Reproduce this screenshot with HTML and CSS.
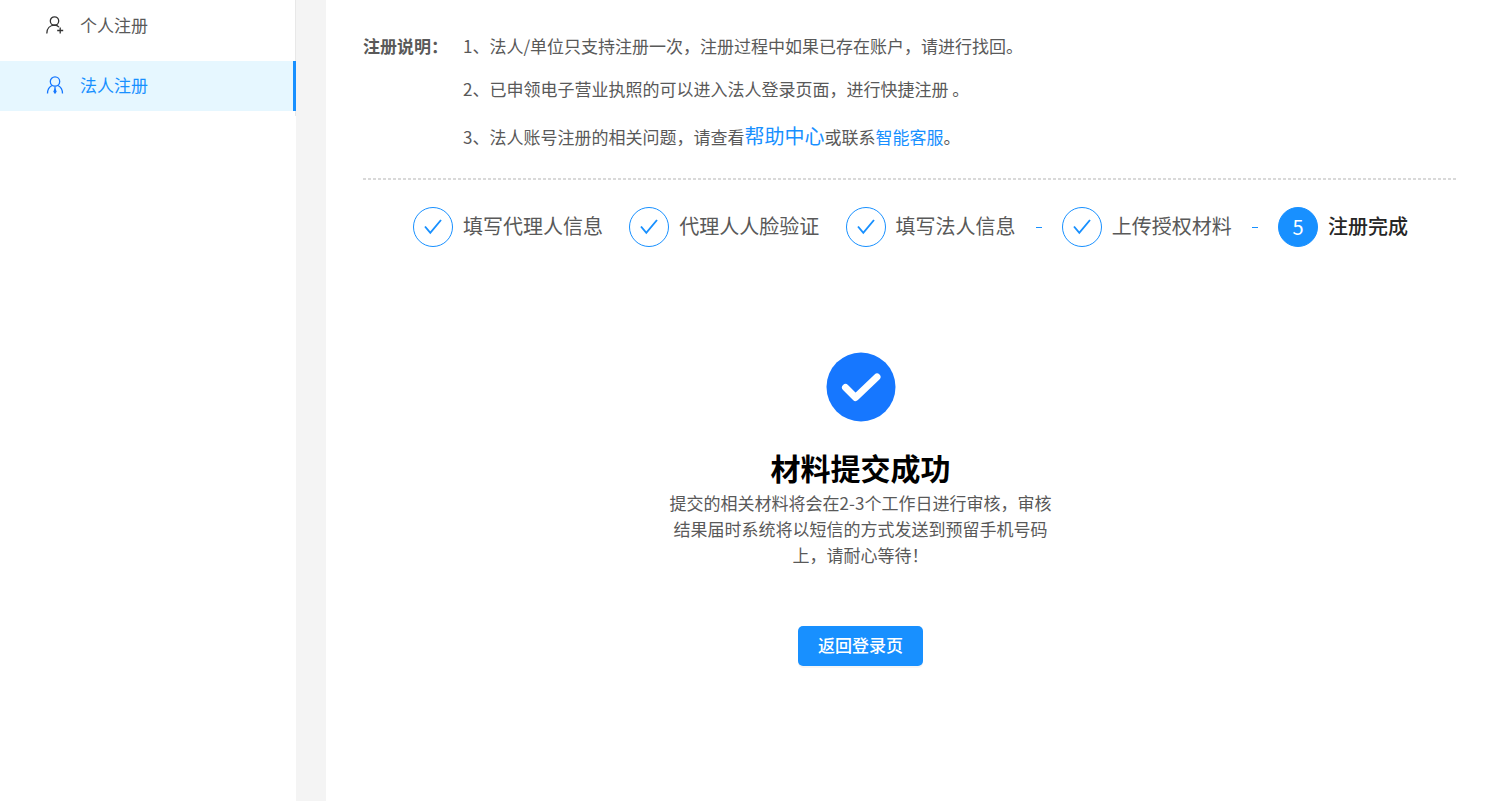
FILE: index.html
```
<!DOCTYPE html>
<html lang="zh-CN">
<head>
    <meta charset="UTF-8">
    <meta name="viewport" content="width=device-width, initial-scale=1.0">
    <title>法人注册</title>
    <link rel="stylesheet" href="styles.css">
</head>
<body>
    <!-- 左侧菜单 -->
    <aside class="sidebar">
        <nav class="menu">
            <a class="menu-item" href="#person">
                <svg class="menu-icon" viewBox="0 0 18 18" fill="none" stroke="currentColor">
                    <circle cx="8.500" cy="5" r="4.200"/>
                    <path d="M.8 17.500C.8 12.500 4 9.300 8.500 9.200c2 0 3.500.8 4.500 2M14.200 11.500v6M11.200 14.500h6"/>
                </svg>
                个人注册
            </a>
            <a class="menu-item active" href="#legal">
                <svg class="menu-icon" viewBox="0 0 18 18" fill="none" stroke="currentColor">
                    <circle cx="9" cy="5.500" r="4.700"/>
                    <path d="M1.500 17.500c0-4 1.500-6.500 4.500-8M16.500 17.500c0-4-1.500-6.500-4.500-8M9 10.500v4"/>
                    <path d="M9 13.500l-1 2 1 1.500 1-1.500z" fill="currentColor"/>
                </svg>
                法人注册
            </a>
        </nav>
    </aside>

    <main class="content">
        <!-- 注册说明 -->
        <section class="notice">
            <strong class="notice-title">注册说明：</strong>
            <div class="notice-list">
                <p>1、法人/单位只支持注册一次，注册过程中如果已存在账户，请进行找回。</p>
                <p>2、已申领电子营业执照的可以进入法人登录页面，进行快捷注册 。</p>
                <p>3、法人账号注册的相关问题，请查看<a class="help" href="#help">帮助中心</a>或联系<a href="#service">智能客服</a>。</p>
            </div>
        </section>
        <hr class="divider">

        <!-- 步骤条 -->
        <ol class="steps">
            <li class="step">
                <span class="step-icon"><svg viewBox="0 0 20 20"><path d="M2 9.500l5.300 6.300L18 3"/></svg></span>
                <span class="step-title">填写代理人信息</span>
                <span class="step-tail"></span>
            </li>
            <li class="step">
                <span class="step-icon"><svg viewBox="0 0 20 20"><path d="M2 9.500l5.300 6.300L18 3"/></svg></span>
                <span class="step-title">代理人人脸验证</span>
                <span class="step-tail"></span>
            </li>
            <li class="step">
                <span class="step-icon"><svg viewBox="0 0 20 20"><path d="M2 9.500l5.300 6.300L18 3"/></svg></span>
                <span class="step-title">填写法人信息</span>
                <span class="step-tail"></span>
            </li>
            <li class="step">
                <span class="step-icon"><svg viewBox="0 0 20 20"><path d="M2 9.500l5.300 6.300L18 3"/></svg></span>
                <span class="step-title">上传授权材料</span>
                <span class="step-tail"></span>
            </li>
            <li class="step current">
                <span class="step-icon">5</span>
                <span class="step-title">注册完成</span>
            </li>
        </ol>

        <!-- 提交结果 -->
        <section class="result">
            <svg class="result-icon" viewBox="0 0 70 70">
                <circle cx="35" cy="35" r="34.500" fill="#1677ff"/>
                <path d="M19.500 35.500l10 10 21.500-20.500" fill="none" stroke="#fff" stroke-width="7" stroke-linecap="round" stroke-linejoin="round"/>
            </svg>
            <h1>材料提交成功</h1>
            <p>提交的相关材料将会在2-3个工作日进行审核，审核结果届时系统将以短信的方式发送到预留手机号码上，请耐心等待！</p>
            <button class="btn-back" type="button">返回登录页</button>
        </section>
    </main>
</body>
</html>
```

FILE: styles.css
```
* {
    box-sizing: border-box;
}

body {
    display: flex;
    gap: 30px;
    min-height: 100vh;
    margin: 0;
    background-color: #f4f4f4;
    color: #595959;
    font-family: "Noto Sans CJK SC", sans-serif;
    font-size: 17px;
    line-height: 26px;
}

a {
    color: #1890ff;
    text-decoration: none;
}

.sidebar {
    flex: 0 0 296px;
    background-color: #fff;
}

.menu {
    display: flex;
    flex-direction: column;
    gap: 10px;
    padding-bottom: 5px;
    border-right: 1px solid #e8e8e8;
}

.menu-item {
    display: flex;
    align-items: center;
    gap: 16px;
    height: 51px;
    padding: 0 0 2px 46px;
    color: #595959;
}

.menu-item.active {
    height: 50px;
    margin-right: -1px;
    border-right: 3px solid #1890ff;
    background-color: #e6f7ff;
    color: #1890ff;
}

.menu-icon {
    width: 18px;
    height: 18px;
    color: #333;
    stroke-width: 1.3;
}

.active .menu-icon {
    color: #1677ff;
}

.content {
    flex: 1;
    min-width: 0;
    padding: 33px 27px 40px 37px;
    background-color: #fff;
}

.notice {
    display: flex;
    padding-bottom: 28px;
}

.notice-title {
    flex: 0 0 100px;
}

.notice-list p {
    margin: 0 0 17px;
}

.notice-list p:last-child {
    margin: 21px 0 0;
}

.help {
    font-size: 20px;
}

.divider {
    height: 2px;
    margin: 0;
    border: none;
    background: repeating-linear-gradient(to right, #d9d9d9 0 3px, transparent 3px 5px);
}

.steps {
    display: flex;
    margin: 0;
    padding: 27px 50px 0;
    list-style: none;
    font-size: 20px;
}

.step {
    display: flex;
    flex: 1;
    align-items: center;
    min-width: 0;
    overflow: hidden;
    white-space: nowrap;
}

.step.current {
    flex: none;
    color: #262626;
    font-weight: 500;
}

.step-icon {
    display: flex;
    flex: 0 0 40px;
    align-items: center;
    justify-content: center;
    height: 40px;
    margin-right: 10px;
    border: 1px solid #1890ff;
    border-radius: 50%;
}

.step-icon svg {
    width: 20px;
    height: 20px;
    fill: none;
    stroke: #1890ff;
    stroke-width: 1.9;
}

.current .step-icon {
    background-color: #1890ff;
    color: #fff;
    font-weight: 400;
}

.step-title {
    flex: none;
    padding-bottom: 2px;
}

.step-tail {
    flex: 1;
    height: 1px;
    margin: 0 20px;
    background-color: #1890ff;
}

.result {
    display: flex;
    flex-direction: column;
    align-items: center;
    padding: 105px 100px 0 0;
    text-align: center;
}

.result-icon {
    width: 70px;
    height: 70px;
}

.result h1 {
    margin: 22px 0 0;
    color: #000;
    font-size: 30px;
    line-height: 46px;
}

.result p {
    max-width: 396px;
    margin: 0 0 58px;
}

.btn-back {
    height: 40px;
    padding: 0 20px 3px;
    border: none;
    border-radius: 5px;
    background-color: #1890ff;
    box-shadow: 0 2px 0 rgba(0, 0, 0, 0.04);
    color: #fff;
    font-family: inherit;
    font-size: 17px;
    font-weight: 500;
    cursor: pointer;
}

.btn-back:hover {
    background-color: #40a9ff;
}
```
